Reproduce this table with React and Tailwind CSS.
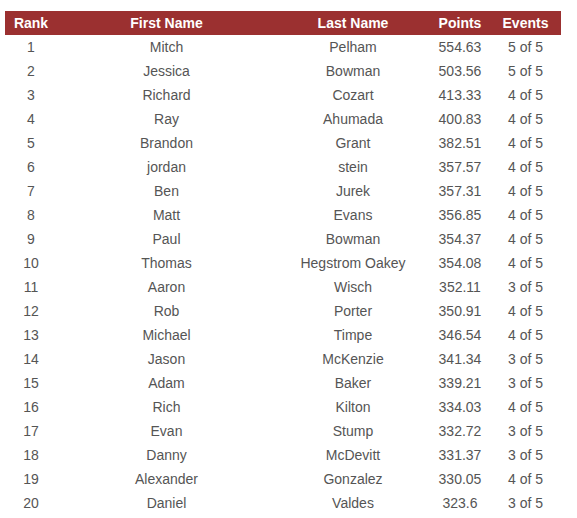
const rows = [
  [1, 'Mitch', 'Pelham', '554.63', '5 of 5'],
  [2, 'Jessica', 'Bowman', '503.56', '5 of 5'],
  [3, 'Richard', 'Cozart', '413.33', '4 of 5'],
  [4, 'Ray', 'Ahumada', '400.83', '4 of 5'],
  [5, 'Brandon', 'Grant', '382.51', '4 of 5'],
  [6, 'jordan', 'stein', '357.57', '4 of 5'],
  [7, 'Ben', 'Jurek', '357.31', '4 of 5'],
  [8, 'Matt', 'Evans', '356.85', '4 of 5'],
  [9, 'Paul', 'Bowman', '354.37', '4 of 5'],
  [10, 'Thomas', 'Hegstrom Oakey', '354.08', '4 of 5'],
  [11, 'Aaron', 'Wisch', '352.11', '3 of 5'],
  [12, 'Rob', 'Porter', '350.91', '4 of 5'],
  [13, 'Michael', 'Timpe', '346.54', '4 of 5'],
  [14, 'Jason', 'McKenzie', '341.34', '3 of 5'],
  [15, 'Adam', 'Baker', '339.21', '3 of 5'],
  [16, 'Rich', 'Kilton', '334.03', '4 of 5'],
  [17, 'Evan', 'Stump', '332.72', '3 of 5'],
  [18, 'Danny', 'McDevitt', '331.37', '3 of 5'],
  [19, 'Alexander', 'Gonzalez', '330.05', '4 of 5'],
  [20, 'Daniel', 'Valdes', '323.6', '3 of 5'],
]

export default function App() {
  return (
    <div className="bg-white min-h-screen pt-[11px] pl-[5px] font-['Liberation_Sans',Arial,sans-serif] text-[14px]">
      <table className="w-[556px] table-fixed border-collapse">
        <colgroup>
          <col className="w-[52px]" />
          <col className="w-[219px]" />
          <col className="w-[154px]" />
          <col className="w-[60px]" />
          <col className="w-[71px]" />
        </colgroup>
        <thead>
          <tr className="bg-[#9b3030] text-white h-[24px]">
            <th className="font-bold text-center p-0">Rank</th>
            <th className="font-bold text-center p-0">First Name</th>
            <th className="font-bold text-center p-0">Last Name</th>
            <th className="font-bold text-center p-0">Points</th>
            <th className="font-bold text-center p-0">Events</th>
          </tr>
        </thead>
        <tbody className="text-[#555]">
          {rows.map((r) => (
            <tr key={r[0]} className="h-[24px]">
              {r.map((c, i) => (
                <td key={i} className="text-center p-0">{c}</td>
              ))}
            </tr>
          ))}
        </tbody>
      </table>
    </div>
  )
}
